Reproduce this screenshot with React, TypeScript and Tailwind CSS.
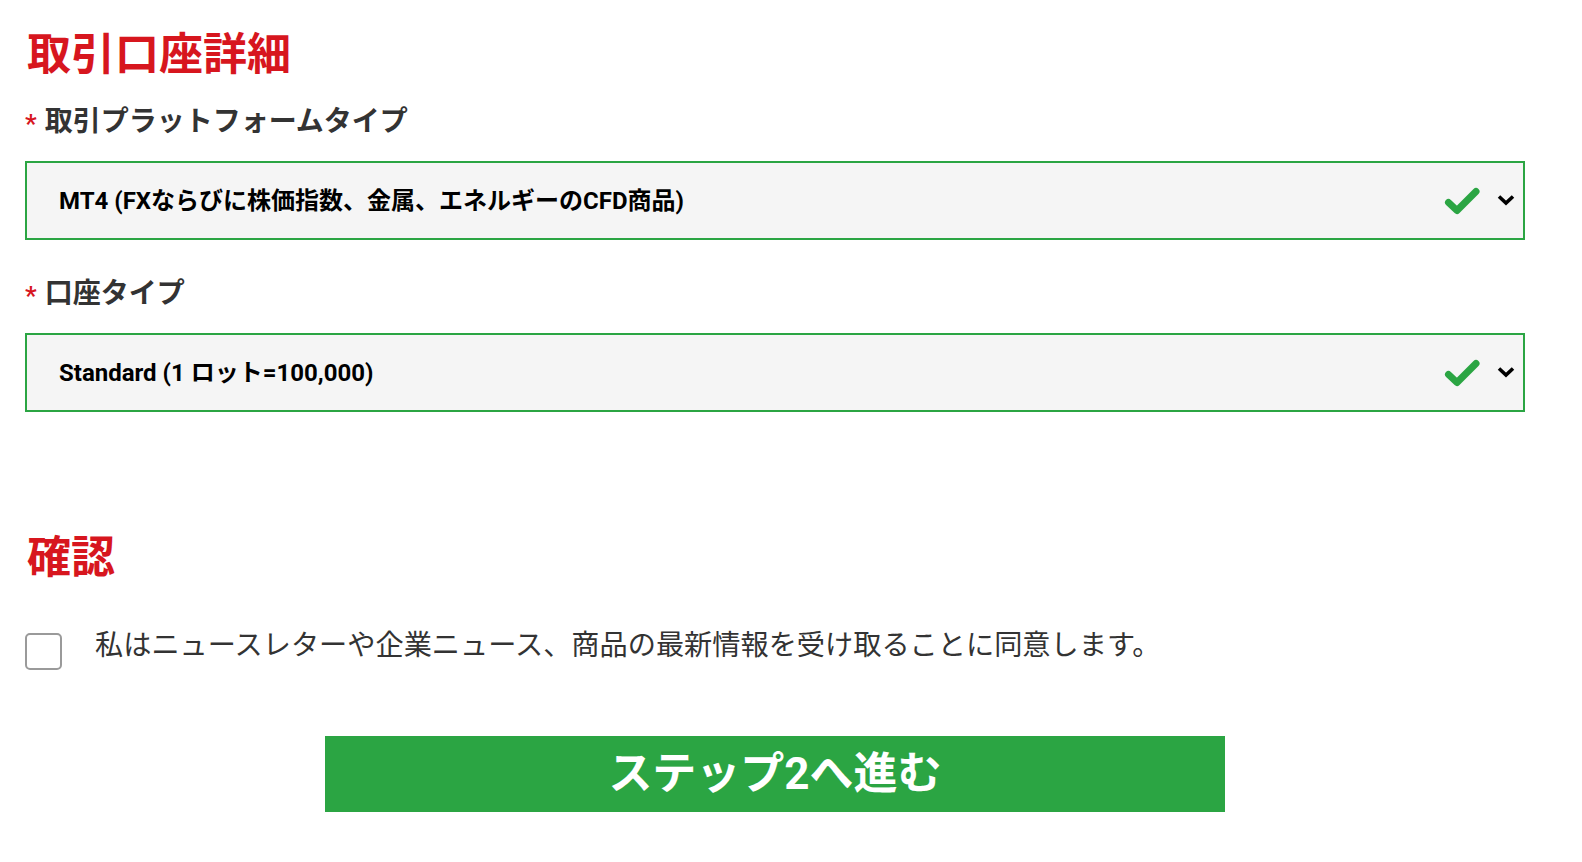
import { useState } from "react";

const CheckIcon = () => (
  <svg width="37" height="28" viewBox="0 0 37 28" fill="none">
    <path d="M4.5 15.5 L13 23.5 L32 4.5" stroke="#2ba543" strokeWidth="7" strokeLinecap="round" strokeLinejoin="round" />
  </svg>
);

const Chevron = () => (
  <svg width="18" height="12" viewBox="0 0 18 12" fill="none">
    <path d="M2 2.5 L9 9 L16 2.5" stroke="#000" strokeWidth="3.6" />
  </svg>
);

const SelectBox = ({ value }: { value: string }) => (
  <div className="flex items-center h-[79px] border-2 border-[#2ba543] bg-[#f5f5f5] pl-[32px] pr-[8px]">
    <span className="flex-1 text-[24px] leading-[24px] font-bold text-black mt-[1px]">{value}</span>
    <CheckIcon />
    <span className="ml-[16px] -mt-[2px]">
      <Chevron />
    </span>
  </div>
);

const Label = ({ text, className }: { text: string; className?: string }) => (
  <div className={"h-[28px] text-[28px] leading-[28px] font-semibold text-[#333] " + (className ?? "")}>
    <span className="relative top-[2px] text-[#d7161e] text-[26px] leading-none mr-[8px]">*</span>
    {text}
  </div>
);

export default function App() {
  const [agree, setAgree] = useState(false);

  return (
    <div className="w-[1500px] ml-[25px] pt-[33px] font-['Roboto','Noto_Sans_CJK_JP',sans-serif]">
      <h2 className="text-[44px] leading-[44px] font-bold text-[#d7161e] pl-[2px]">取引口座詳細</h2>

      <Label text="取引プラットフォームタイプ" className="mt-[31px]" />
      <div className="mt-[25px]">
        <SelectBox value="MT4 (FXならびに株価指数、金属、エネルギーのCFD商品)" />
      </div>

      <Label text="口座タイプ" className="mt-[40px]" />
      <div className="mt-[25px]">
        <SelectBox value="Standard (1 ロット=100,000)" />
      </div>

      <h2 className="mt-[124px] text-[44px] leading-[44px] font-bold text-[#d7161e] pl-[2px]">確認</h2>

      <div className="mt-[53px] flex items-start">
        <button
          onClick={() => setAgree(!agree)}
          className="w-[37px] h-[37px] shrink-0 rounded-[5px] border-2 border-[#9a9a9a] bg-white"
        />
        <p className="ml-[33px] -mt-[1px] text-[28.2px] leading-[28px] text-[#333]">
          私はニュースレターや企業ニュース、商品の最新情報を受け取ることに同意します。
        </p>
      </div>

      <div className="mt-[66px] flex justify-center">
        <button className="w-[900px] h-[76px] bg-[#2ba543] text-white text-[44px] leading-[44px] font-bold">
          ステップ2へ進む
        </button>
      </div>
    </div>
  );
}
